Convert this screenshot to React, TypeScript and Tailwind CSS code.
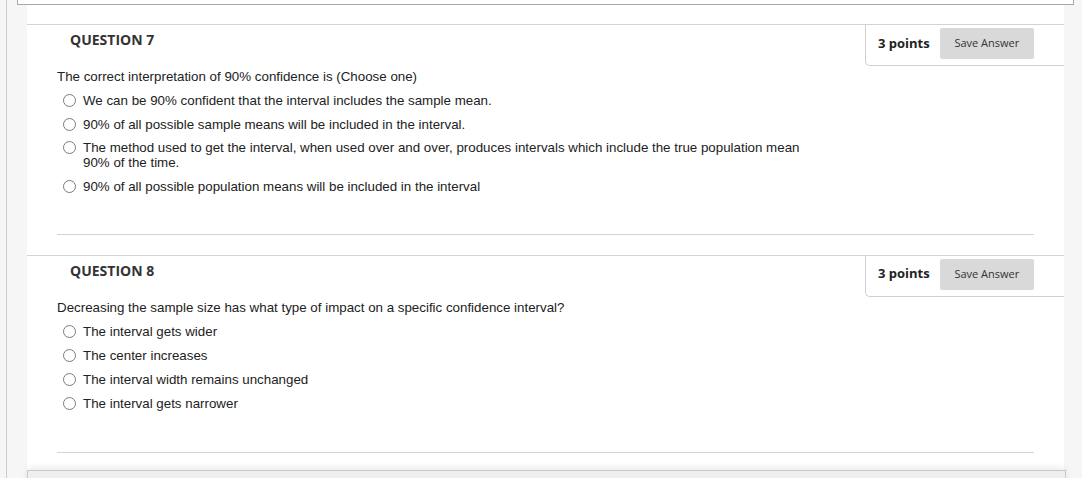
import React from "react";

type Q = { num: number; text: string; options: string[]; gap: string; sep: string };

const questions: Q[] = [
  {
    num: 7,
    text: "The correct interpretation of 90% confidence is (Choose one)",
    options: [
      "We can be 90% confident that the interval includes the sample mean.",
      "90% of all possible sample means will be included in the interval.",
      "The method used to get the interval, when used over and over, produces intervals which include the true population mean 90% of the time.",
      "90% of all possible population means will be included in the interval",
    ],
    gap: "gap-[8.5px]",
    sep: "mt-[40px]",
  },
  {
    num: 8,
    text: "Decreasing the sample size has what type of impact on a specific confidence interval?",
    options: [
      "The interval gets wider",
      "The center increases",
      "The interval width remains unchanged",
      "The interval gets narrower",
    ],
    gap: "gap-[9px]",
    sep: "mt-[41px]",
  },
];

function Question({ q }: { q: Q }) {
  return (
    <div className="border-t border-[#d3d3d3]">
      <div className="flex justify-between">
        <div className="pl-[43px] pt-[5px] text-[14px] leading-[20px] font-bold text-[#333] font-['Open_Sans',sans-serif]">
          QUESTION {q.num}
        </div>
        <div className="w-[199px] h-[41px] border-l border-b border-[#cfcfcf] rounded-bl-[5px] flex items-center pl-[12px] pr-[30px] pb-[3px] font-['Open_Sans',sans-serif]">
          <span className="text-[13px] font-bold text-[#222] whitespace-nowrap">3 points</span>
          <button className="ml-[10px] w-[95px] h-[31px] bg-[#d9d9d9] rounded-[2px] text-[11px] text-[#333] flex items-center justify-center">
            Save Answer
          </button>
        </div>
      </div>
      <div className="px-[30px] font-['Liberation_Sans',Arial,sans-serif] text-[13.33px] leading-[15px] text-[#222]">
        <div className="mt-[3px]">{q.text}</div>
        <div className={`mt-[9px] flex flex-col pl-[6px] ${q.gap}`}>
          {q.options.map((o, i) => (
            <div key={i} className="flex items-start">
              <span className="mt-[1px] w-[13px] h-[13px] shrink-0 rounded-full border border-[#7a7a7a] bg-white" />
              <span className="ml-[7px] max-w-[730px]">{o}</span>
            </div>
          ))}
        </div>
        <div className={`h-px bg-[#d3d3d3] ${q.sep}`} />
      </div>
    </div>
  );
}

export default function App() {
  return (
    <div className="relative h-[478px] w-[1082px] overflow-hidden bg-[#f6f6f6] flex">
      <div className="w-[6px] shrink-0" />
      <div className="w-px shrink-0 bg-[#cbcbcb]" />
      <div className="w-[20px] shrink-0" />
      <div className="w-[1037px] shrink-0 bg-white flex flex-col">
        <div className="h-[24px] shrink-0" />
        <Question q={questions[0]} />
        <div className="h-[20px] shrink-0" />
        <Question q={questions[1]} />
        <div className="h-[17px] shrink-0" />
        <div className="w-[1039px] h-[20px] shrink-0 bg-[#efefef] border border-[#c8c8c8] shadow-[0_-3px_6px_rgba(0,0,0,0.07)]" />
      </div>
      <div className="flex-1" />
      <div className="absolute left-[17px] top-[-30px] w-[1057px] h-[35px] border border-[#a8a8a8] bg-white" />
    </div>
  );
}
